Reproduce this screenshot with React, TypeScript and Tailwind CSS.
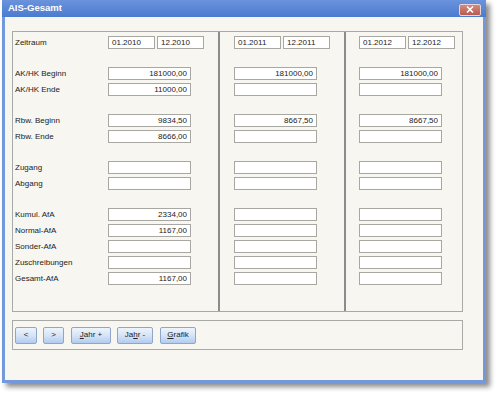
import React from "react";

type Field = { label: string; date?: boolean };

const groups: Field[][] = [
  [{ label: "Zeitraum", date: true }],
  [{ label: "AK/HK Beginn" }, { label: "AK/HK Ende" }],
  [{ label: "Rbw. Beginn" }, { label: "Rbw. Ende" }],
  [{ label: "Zugang" }, { label: "Abgang" }],
  [
    { label: "Kumul. AfA" },
    { label: "Normal-AfA" },
    { label: "Sonder-AfA" },
    { label: "Zuschreibungen" },
    { label: "Gesamt-AfA" },
  ],
];

// values per column, in row order (dates as [from, to])
const columns: { dates: [string, string]; values: string[] }[] = [
  {
    dates: ["01.2010", "12.2010"],
    values: ["181000,00", "11000,00", "9834,50", "8666,00", "", "", "2334,00", "1167,00", "", "", "1167,00"],
  },
  {
    dates: ["01.2011", "12.2011"],
    values: ["181000,00", "", "8667,50", "", "", "", "", "", "", "", ""],
  },
  {
    dates: ["01.2012", "12.2012"],
    values: ["181000,00", "", "8667,50", "", "", "", "", "", "", "", ""],
  },
];

const Box = ({ value, right, w }: { value: string; right?: boolean; w: string }) => (
  <div
    className={`${w} h-[13px] bg-white border border-[#a8a7a2] px-[3px] text-[8px] leading-[11px] text-[#222] ${
      right ? "text-right" : "text-left"
    }`}
  >
    {value}
  </div>
);

const Column = ({ col, labels, className }: { col: number; labels?: boolean; className: string }) => {
  const data = columns[col];
  let idx = 0;
  return (
    <div className={`flex flex-col gap-[18px] ${className}`}>
      {groups.map((g, gi) => (
        <div key={gi} className="flex flex-col gap-[3px]">
          {g.map((f) => {
            const v = f.date ? "" : data.values[idx++];
            return (
              <div key={f.label} className="flex items-center h-[13px]">
                {labels && <div className="w-[93px] text-[8px] text-[#222]">{f.label}</div>}
                {f.date ? (
                  <div className="flex gap-[2px]">
                    <Box w="w-[47px]" value={data.dates[0]} />
                    <Box w="w-[47px]" value={data.dates[1]} />
                  </div>
                ) : (
                  <Box w="w-[83px]" value={v} right />
                )}
              </div>
            );
          })}
        </div>
      ))}
    </div>
  );
};

const Btn = ({ children, w, className = "" }: { children: React.ReactNode; w: string; className?: string }) => (
  <button
    className={`${w} ${className} h-[17px] rounded-[2px] border border-[#8ea6cc] bg-gradient-to-b from-[#eef4fc] via-[#d6e4f7] to-[#b2cbee] text-[8px] text-[#222] leading-none`}
  >
    {children}
  </button>
);

export default function App() {
  return (
    <div className="w-[496px] h-[394px] bg-white font-['Liberation_Sans',Arial,sans-serif]">
      <div className="ml-[2px] w-[484px] h-[383px] flex flex-col bg-[#7498dc] shadow-[4px_4px_5px_rgba(0,0,0,0.45)]">
        {/* title bar */}
        <div className="h-[17px] flex items-center justify-between pl-[6px] pr-[5px] bg-gradient-to-b from-[#6a93dc] to-[#4b7bd0]">
          <span className="text-white font-bold text-[9.5px]">AIS-Gesamt</span>
          <div className="w-[22px] h-[12px] mt-[2px] flex items-center justify-center rounded-[2px] border border-[#e8d6d2] bg-gradient-to-b from-[#d48a80] to-[#b75a4e]">
            <svg width="8" height="7" viewBox="0 0 8 7">
              <path d="M1 0.5 L7 6.5 M7 0.5 L1 6.5" stroke="white" strokeWidth="1.6" />
            </svg>
          </div>
        </div>

        {/* client area */}
        <div className="flex-1 mx-[3px] mb-[3px] bg-[#f7f6f1] pt-[14px] pl-[7px]">
          <div className="w-[451px] h-[281px] flex border border-[#a9a9a6]">
            <Column col={0} labels className="w-[205px] pt-[4px] pl-[2px]" />
            <Column col={1} className="w-[126px] border-l-2 border-[#8c8c8a] pt-[4px] pl-[14px]" />
            <Column col={2} className="flex-1 border-l-2 border-[#8c8c8a] pt-[4px] pl-[13px]" />
          </div>

          <div className="mt-[8px] w-[451px] h-[30px] border border-[#a9a9a6] flex items-center pl-[2px] gap-[6px]">
            <Btn w="w-[22px]">&lt;</Btn>
            <Btn w="w-[21px]">&gt;</Btn>
            <Btn w="w-[40px]" className="ml-[1px]">
              <u>J</u>ahr +
            </Btn>
            <Btn w="w-[36px]">
              Ja<u>h</u>r -
            </Btn>
            <Btn w="w-[36px]" className="ml-[1px]">
              <u>G</u>rafik
            </Btn>
          </div>
        </div>
      </div>
    </div>
  );
}
